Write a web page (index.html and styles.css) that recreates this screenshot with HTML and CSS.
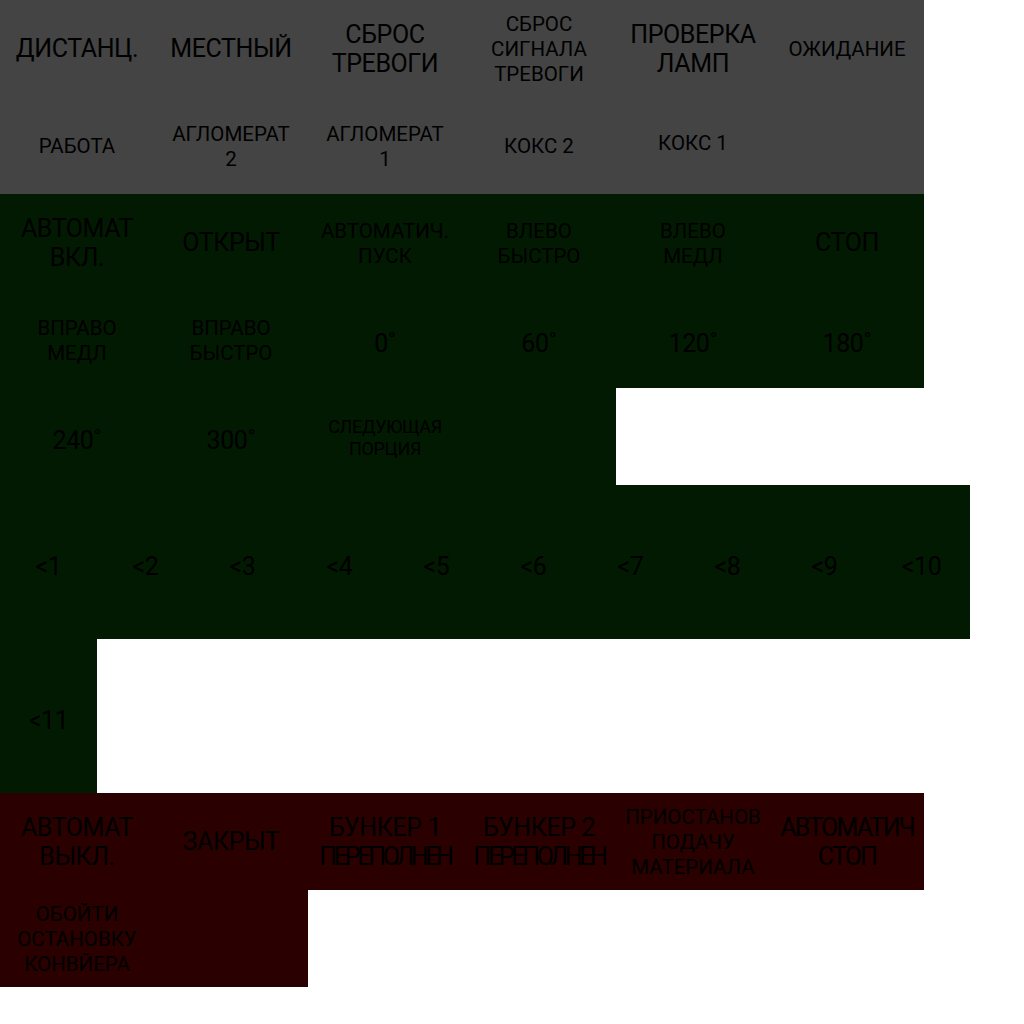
FILE: index.html
```html
<!DOCTYPE html>
<html lang="ru">

<head>
  <meta charset="UTF-8">
  <meta name="viewport" content="width=device-width, initial-scale=1.0">
  <title>Пульт</title>
  <link rel="stylesheet" href="styles.css">
</head>

<body>
  <div id="panel">
    <div class="group gray">
      <div class="tiles wide">
        <button class="tile big">ДИСТАНЦ.</button>
        <button class="tile big">МЕСТНЫЙ</button>
        <button class="tile big">СБРОС<br>ТРЕВОГИ</button>
        <button class="tile small">СБРОС<br>СИГНАЛА<br>ТРЕВОГИ</button>
        <button class="tile big">ПРОВЕРКА<br>ЛАМП</button>
        <button class="tile small">ОЖИДАНИЕ</button>
        <button class="tile small">РАБОТА</button>
        <button class="tile small">АГЛОМЕРАТ<br>2</button>
        <button class="tile small">АГЛОМЕРАТ<br>1</button>
        <button class="tile small">КОКС 2</button>
        <button class="tile small up">КОКС 1</button>
        <button class="tile"></button>
      </div>
    </div>

    <div class="group green">
      <div class="tiles wide">
        <button class="tile big">АВТОМАТ<br>ВКЛ.</button>
        <button class="tile big">ОТКРЫТ</button>
        <button class="tile small">АВТОМАТИЧ.<br>ПУСК</button>
        <button class="tile small">ВЛЕВО<br>БЫСТРО</button>
        <button class="tile small">ВЛЕВО<br>МЕДЛ</button>
        <button class="tile big">СТОП</button>
        <button class="tile small">ВПРАВО<br>МЕДЛ</button>
        <button class="tile small">ВПРАВО<br>БЫСТРО</button>
        <button class="tile big num">0˚</button>
        <button class="tile big num">60˚</button>
        <button class="tile big num">120˚</button>
        <button class="tile big num">180˚</button>
        <button class="tile big num">240˚</button>
        <button class="tile big num">300˚</button>
        <button class="tile tiny">СЛЕДУЮЩАЯ<br>ПОРЦИЯ</button>
        <button class="tile"></button>
      </div>
      <div class="tiles narrow">
        <button class="tile tall big num">&lt;1</button>
        <button class="tile tall big num">&lt;2</button>
        <button class="tile tall big num">&lt;3</button>
        <button class="tile tall big num">&lt;4</button>
        <button class="tile tall big num">&lt;5</button>
        <button class="tile tall big num">&lt;6</button>
        <button class="tile tall big num">&lt;7</button>
        <button class="tile tall big num">&lt;8</button>
        <button class="tile tall big num">&lt;9</button>
        <button class="tile tall big num">&lt;10</button>
        <button class="tile tall big num">&lt;11</button>
      </div>
    </div>

    <div class="group red">
      <div class="tiles wide">
        <button class="tile big">АВТОМАТ<br>ВЫКЛ.</button>
        <button class="tile big">ЗАКРЫТ</button>
        <button class="tile big">БУНКЕР 1<br><span class="squeeze">ПЕРЕПОЛНЕН</span></button>
        <button class="tile big">БУНКЕР 2<br><span class="squeeze">ПЕРЕПОЛНЕН</span></button>
        <button class="tile small">ПРИОСТАНОВ<br>ПОДАЧУ<br>МАТЕРИАЛА</button>
        <button class="tile big tight">АВТОМАТИЧ<br>СТОП</button>
        <button class="tile small">ОБОЙТИ<br>ОСТАНОВКУ<br>КОНВЙЕРА</button>
        <button class="tile"></button>
      </div>
    </div>
  </div>
</body>

</html>
```

FILE: styles.css
```css
body {
  margin: 0;
  background: #ffffff;
  font-family: Roboto, "Liberation Sans", sans-serif;
}

#panel {
  display: flex;
  flex-direction: column;
  align-items: flex-start;
}

.group {
  display: flex;
  flex-direction: column;
  align-items: flex-start;
}

.tiles {
  display: flex;
  flex-wrap: wrap;
}

.tiles.wide {
  width: 924px;
}

.tiles.narrow {
  width: 970px;
}

.tile {
  width: 154px;
  height: 97px;
  margin: 0;
  padding: 2px 0 0;
  border: none;
  background: transparent;
  color: #000000;
  font-family: inherit;
  text-align: center;
  display: flex;
  justify-content: center;
  align-items: center;
  flex-direction: column;
}

.tile.tall {
  width: 97px;
  height: 154px;
}

.gray .tile {
  background: #444444;
}

.green .tile {
  background: #021a02;
}

.red .tile {
  background: #2a0000;
}

.big {
  font-size: 25px;
  line-height: 28.5px;
  letter-spacing: -0.4px;
}

.small {
  font-size: 20.5px;
  line-height: 25px;
}

.tiny {
  font-size: 18px;
  line-height: 22px;
  letter-spacing: -0.3px;
}

.up {
  padding: 0 0 4px;
}

.tile.num {
  padding-top: 10px;
}

.tight {
  letter-spacing: -1.8px;
}

.squeeze {
  letter-spacing: -3.3px;
}
```
